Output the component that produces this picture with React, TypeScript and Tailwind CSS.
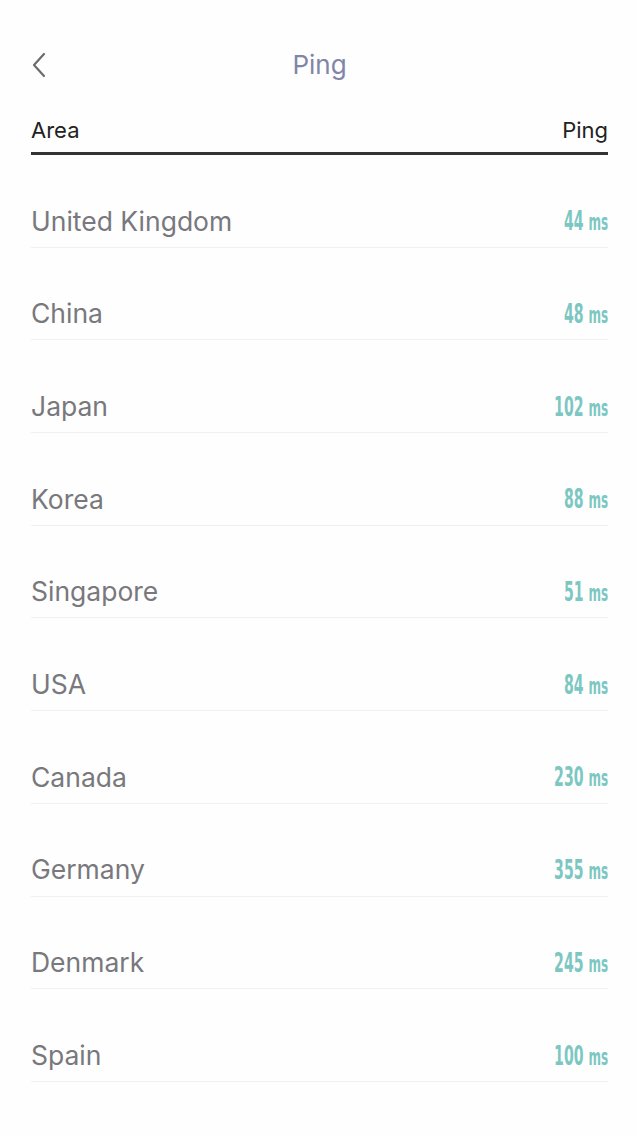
import React from "react";

const rows: [string, string][] = [
  ["United Kingdom", "44"],
  ["China", "48"],
  ["Japan", "102"],
  ["Korea", "88"],
  ["Singapore", "51"],
  ["USA", "84"],
  ["Canada", "230"],
  ["Germany", "355"],
  ["Denmark", "245"],
  ["Spain", "100"],
];

export default function App() {
  return (
    <div
      className="w-[639px] h-[1136px] bg-[#fefefe] overflow-hidden"
      style={{ fontFamily: "Inter, 'Open Sans', 'Liberation Sans', sans-serif" }}
    >
      <div className="relative h-[130px] flex items-center justify-center">
        <div className="absolute left-[31px] top-[52px] w-[16px] h-[26px]">
          <svg width="16" height="26" viewBox="0 0 16 26" fill="none">
            <path d="M13 2 L3 13 L13 24" stroke="#6b6b70" strokeWidth="2.2" strokeLinecap="round" strokeLinejoin="round" />
          </svg>
        </div>
        <div className="absolute top-[48px] left-0 right-0 text-center text-[26px] leading-[34px] text-[#7f86a8]">
          Ping
        </div>
      </div>
      <div className="mx-[31px]">
        <div className="flex justify-between items-center h-[0px]">
          <span className="text-[22px] text-[#222] leading-none">Area</span>
          <span className="text-[22px] text-[#222] leading-none">Ping</span>
        </div>
        <div className="h-[3px] bg-[#333] mt-[22px]" />
        {rows.map(([name, ms]) => (
          <div key={name} className="h-[92.7px] flex flex-col">
            <div className="flex-1 flex items-center justify-between pt-[40px]">
              <span className="text-[26.5px] text-[#78787d] leading-none">{name}</span>
              <span
                className="text-[27px] text-[#7cc7c2] leading-none font-bold origin-right scale-x-[0.58] inline-block"
                style={{ fontFamily: "'DejaVu Sans Condensed', 'Liberation Sans Narrow', 'Liberation Sans', sans-serif" }}
              >
                {ms} <span className="text-[23px]">ms</span>
              </span>
            </div>
            <div className="h-[1px] bg-[#f1f1f3]" />
          </div>
        ))}
      </div>
    </div>
  );
}
